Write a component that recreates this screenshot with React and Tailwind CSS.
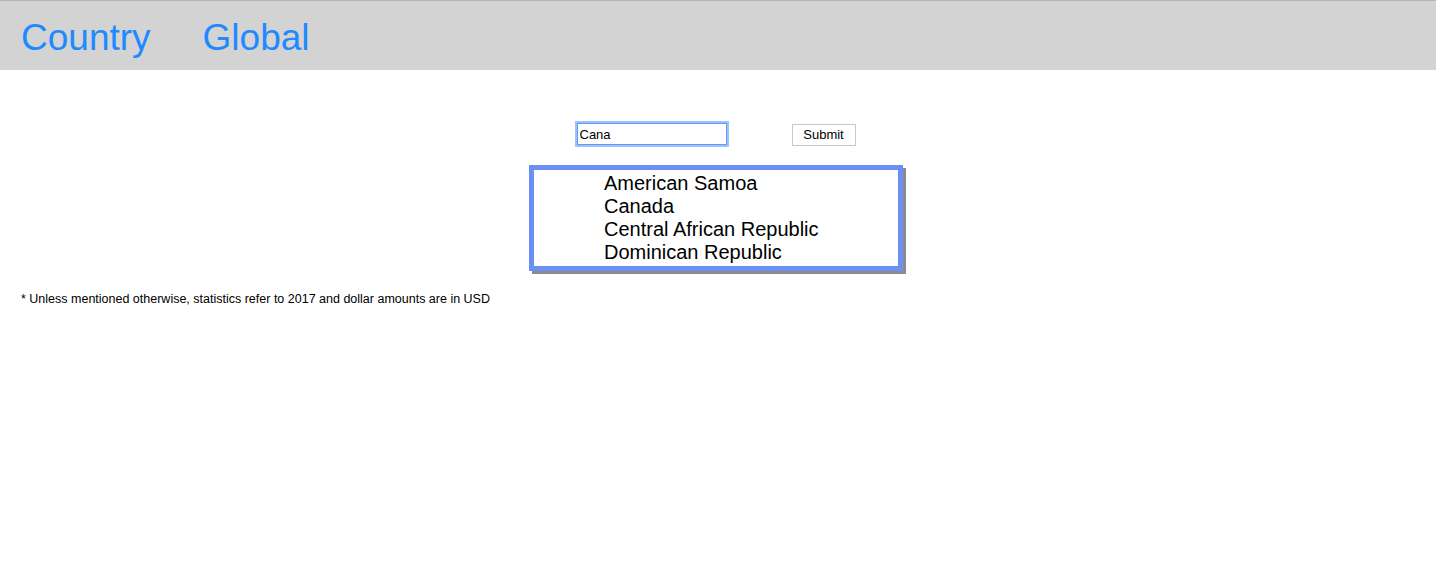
import React, { useState } from 'react';

const countries = ['American Samoa', 'Canada', 'Central African Republic', 'Dominican Republic'];

const App = () => {
  const [query, setQuery] = useState('Cana');

  return (
    <div className="min-h-screen bg-white text-black font-['Liberation_Sans',Arial,sans-serif]">
      {/* Nav */}
      <div className="h-[70px] bg-[#d3d3d3] border-t border-[#b3b3b3] flex items-start pt-[16px] pl-[21px]">
        <a className="text-[37px] leading-[42px] text-[#1e8aff] cursor-pointer">Country</a>
        <a className="text-[37px] leading-[42px] text-[#1e8aff] cursor-pointer ml-[52px]">Global</a>
      </div>

      {/* Search */}
      <div className="flex justify-center pr-[4px] mt-[52px]">
        <div className="flex items-center">
          <input
            value={query}
            onChange={(e) => setQuery(e.target.value)}
            className="w-[150px] h-[22px] px-[2px] text-[13px] border border-[#5b9bf4] shadow-[0_0_0_2px_#9cc2f8] outline-none"
          />
          <button className="ml-[65px] w-[64px] h-[22px] mt-[2px] text-[13px] bg-white border border-[#c8c8c8]">
            Submit
          </button>
        </div>
      </div>

      {/* Suggestions */}
      <div className="flex justify-center pr-[4px] mt-[19px]">
        <ul className="w-[374px] border-[5px] border-[#6a8ff5] shadow-[3px_3px_0_#8c8c8c] pl-[70px] pt-[2px] pb-[2px]">
          {countries.map((c) => (
            <li key={c} className="text-[20px] leading-[23px]">{c}</li>
          ))}
        </ul>
      </div>

      <p className="mt-[19px] ml-[21px] text-[12.5px]">
        * Unless mentioned otherwise, statistics refer to 2017 and dollar amounts are in USD
      </p>
    </div>
  );
};

export default App;
